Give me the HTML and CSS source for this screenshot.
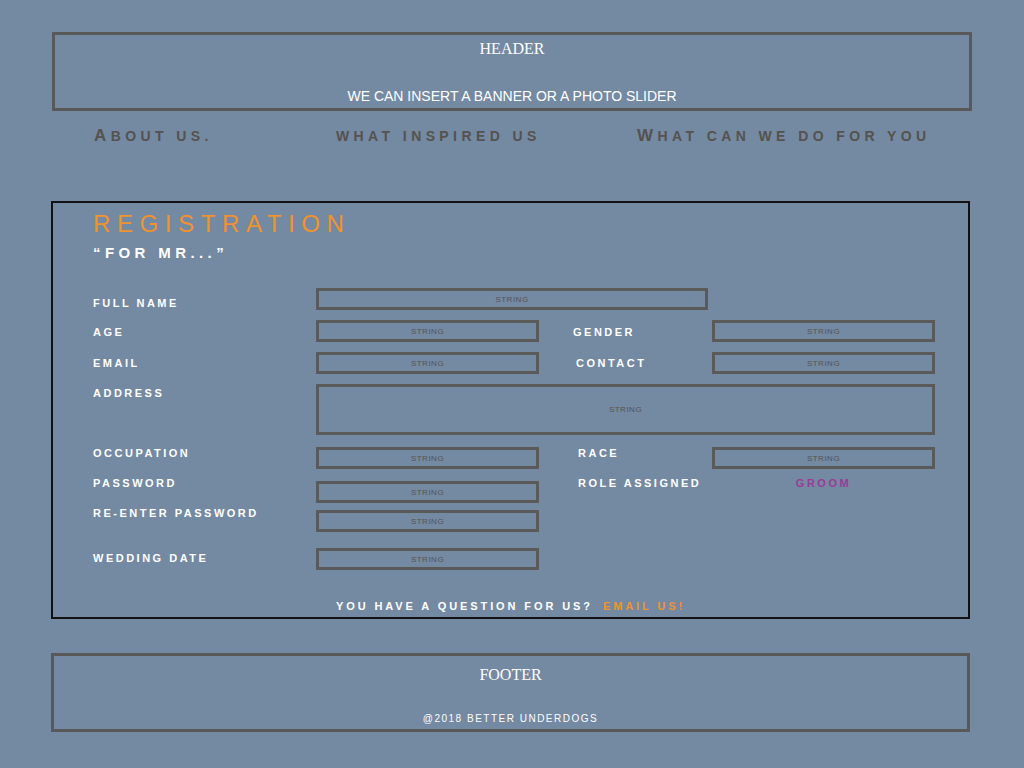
FILE: index.html
```html
<!DOCTYPE html>
<html>
<head>
  <title>Registration</title>
  <link rel="stylesheet" href="styles.css">
</head>
<body>
  <div class="page">
    <header class="header">
      <div class="header-title">HEADER</div>
      <div class="header-banner">WE CAN INSERT A BANNER OR A PHOTO SLIDER</div>
    </header>

    <nav class="nav">
      <a class="nav-link"><span class="cap">A</span>bout us.</a>
      <a class="nav-link">what inspired us</a>
      <a class="nav-link"><span class="cap">W</span>hat can we do for you</a>
    </nav>

    <section class="registration">
      <div class="reg-head">
        <h1 class="reg-title">REGISTRATION</h1>
        <h2 class="reg-sub">“FOR MR...”</h2>
      </div>

      <form class="reg-form">
        <div class="row row-name">
          <label class="label">FULL NAME</label>
          <div class="field field-wide">STRING</div>
        </div>
        <div class="row row-age">
          <label class="label">AGE</label>
          <div class="field">STRING</div>
          <label class="label label-side label-gender">GENDER</label>
          <div class="field">STRING</div>
        </div>
        <div class="row row-email">
          <label class="label">EMAIL</label>
          <div class="field">STRING</div>
          <label class="label label-side">CONTACT</label>
          <div class="field">STRING</div>
        </div>
        <div class="row row-address">
          <label class="label">ADDRESS</label>
          <div class="field field-address">STRING</div>
        </div>
        <div class="row row-occupation">
          <label class="label">OCCUPATION</label>
          <div class="field">STRING</div>
          <label class="label label-side label-race">RACE</label>
          <div class="field">STRING</div>
        </div>
        <div class="row row-password">
          <label class="label">PASSWORD</label>
          <div class="field">STRING</div>
          <label class="label label-side label-race">ROLE ASSIGNED</label>
          <div class="label role">GROOM</div>
        </div>
        <div class="row row-repassword">
          <label class="label">RE-ENTER PASSWORD</label>
          <div class="field">STRING</div>
        </div>
        <div class="row row-wedding">
          <label class="label">WEDDING DATE</label>
          <div class="field">STRING</div>
        </div>
      </form>

      <p class="question">YOU HAVE A QUESTION FOR US? <a class="email">EMAIL US!</a></p>
    </section>

    <footer class="footer">
      <div class="footer-title">FOOTER</div>
      <div class="footer-copy">@2018 BETTER UNDERDOGS</div>
    </footer>
  </div>
</body>
</html>
```

FILE: styles.css
```css
body {
  margin: 0;
  background-color: #7489a2;
  font-family: "Liberation Sans", Arial, sans-serif;
  color: #ffffff;
}

.page {
  width: 920px;
  margin: 0 auto;
  padding-top: 32px;
}

/* header */
.header {
  box-sizing: border-box;
  height: 79px;
  border: 3px solid #595959;
  text-align: center;
}

.header-title,
.footer-title {
  font-family: "Liberation Serif", "Times New Roman", serif;
  font-size: 16px;
  line-height: 20px;
}

.header-title {
  padding-top: 4px;
}

.header-banner {
  margin-top: 29px;
  font-size: 14px;
  line-height: 16px;
}

/* nav */
.nav {
  display: grid;
  grid-template-columns: 242px 301px auto;
  margin-top: 14px;
  padding-left: 42px;
}

.nav-link {
  color: #55524f;
  font-weight: bold;
  font-size: 14px;
  line-height: 22px;
  letter-spacing: 4.4px;
  text-transform: uppercase;
}

.nav-link .cap {
  font-size: 17px;
}

/* registration */
.registration {
  width: 919px;
  box-sizing: border-box;
  margin-top: 54px;
  margin-left: -1px;
  border: 2px solid #111111;
  padding: 7px 0 4px 0;
}

.reg-head {
  padding-left: 40px;
}

.reg-title {
  margin: 0;
  color: #f0922e;
  font-weight: normal;
  font-size: 24px;
  line-height: 28px;
  letter-spacing: 6.6px;
}

.reg-sub {
  margin: 6px 0 0 0;
  font-size: 15px;
  line-height: 18px;
  letter-spacing: 4.4px;
}

.reg-form {
  margin-top: 26px;
  padding-left: 40px;
}

.row {
  display: grid;
  grid-template-columns: 223px 223px 173px 223px;
  align-items: start;
}

.label {
  font-size: 11px;
  font-weight: bold;
  line-height: 14px;
  letter-spacing: 2.5px;
}

.label-side {
  padding-left: 37px;
}

.label-gender {
  padding-left: 34px;
}

.label-race {
  padding-left: 39px;
}

.role {
  color: #9b3b97;
  text-align: center;
}

.field {
  box-sizing: border-box;
  height: 22px;
  border: 3px solid #5a5a5a;
  color: #545454;
  font-size: 8px;
  line-height: 17px;
  letter-spacing: 0.5px;
  text-align: center;
}

.field-wide {
  grid-column: 2 / 4;
  width: 392px;
}

.field-address {
  grid-column: 2 / 5;
  height: 51px;
  line-height: 46px;
}

.row-name .label { margin-top: 8px; }

.row-age { margin-top: 10px; }
.row-age .label { margin-top: 5px; }

.row-email { margin-top: 10px; }
.row-email .label { margin-top: 4px; }

.row-address { margin-top: 10px; }
.row-address .label { margin-top: 2px; }

.row-occupation { margin-top: 12px; }
.row-occupation .label { margin-top: -1px; }

.row-password { margin-top: 12px; }
.row-password .label { margin-top: -5px; }

.row-repassword { margin-top: 7px; }
.row-repassword .label { margin-top: -4px; }

.row-wedding { margin-top: 16px; }
.row-wedding .label { margin-top: 3px; }

.question {
  margin: 29px 0 0 0;
  font-size: 11px;
  font-weight: bold;
  line-height: 14px;
  letter-spacing: 2.9px;
  text-align: center;
}

.email {
  margin-left: 4px;
  color: #f0922e;
}

/* footer */
.footer {
  width: 919px;
  box-sizing: border-box;
  height: 79px;
  margin-top: 34px;
  margin-left: -1px;
  border: 3px solid #595959;
  text-align: center;
}

.footer-title {
  padding-top: 9px;
}

.footer-copy {
  margin-top: 27px;
  font-size: 10px;
  line-height: 14px;
  letter-spacing: 1.5px;
}
```
